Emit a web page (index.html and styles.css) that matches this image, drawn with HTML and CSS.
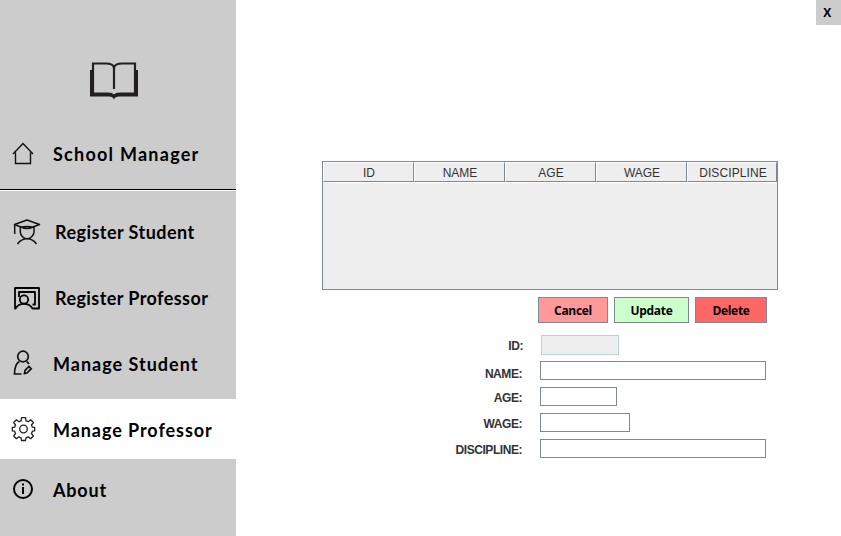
FILE: index.html
```html
<!DOCTYPE html>
<html lang="en">
<head>
<meta charset="utf-8">
<title>School Manager</title>
<link rel="stylesheet" href="styles.css">
</head>
<body>
<div class="app">
  <nav class="sidebar">
    <div class="logo">
      <svg width="50" height="40" viewBox="0 0 50 40" fill="none" stroke="#231f20">
        <path d="M4 33V3.500H17Q24 3.500 25 7.500Q26 3.500 33 3.500H46V33" stroke-width="2.200"/>
        <path d="M25 6V29" stroke-width="2.200"/>
        <path d="M1 10H4V32.500H19Q23.500 32.500 25 34.500Q26.500 32.500 31 32.500H46V10H49V36.500H30Q26 36.500 25 39.500Q24 36.500 20 36.500H1Z" fill="#231f20" stroke="none"/>
      </svg>
    </div>
    <div class="item home">
      <svg class="icon" width="30" height="30" viewBox="0 0 30 30" fill="none" stroke="#111" stroke-width="1.400"><path d="M5 15L15 4.500L25 15M7.500 13.500V24.500H22.500V13.500"/></svg>
      <span class="label t-school">School Manager</span>
    </div>
    <div class="divider"></div>
    <div class="item wide">
      <svg class="icon" width="30" height="30" viewBox="0 -1 30 30" fill="none" stroke="#111" stroke-width="1.500" stroke-linejoin="round"><path d="M2.500 7.500L15 3L27.500 7.500L21 10Q15 8.800 9 10Z M2.700 8V17M9 10Q15 13 21 10M8.300 10V15C8.300 18.500 12 21.800 15 21.800S22 18.500 22 15V10M5.500 27C8 23.500 11 21.800 15 21.800S22 23.500 24.500 27"/></svg>
      <span class="label t-rs">Register Student</span>
    </div>
    <div class="item wide">
      <svg class="icon" width="30" height="30" viewBox="0 -1 30 30" fill="none" stroke="#000" stroke-width="1.800" stroke-linejoin="round"><path d="M3 25.500V5H27V25.500H20.500Q18 20.800 12 20.800T3.500 25.500ZM7 14V9H23V21.500H20.500"/><circle cx="12" cy="16.500" r="4.200"/></svg>
      <span class="label t-rp">Register Professor</span>
    </div>
    <div class="item">
      <svg class="icon" width="30" height="30" viewBox="0 0 30 30" fill="none" stroke="#111" stroke-width="1.700"><circle cx="15" cy="8.500" r="5.300"/><path d="M11.500 13.500Q6.500 16 6.500 26H13.500M18.500 13.500Q20 14.500 21 16"/><path d="M16.500 25.500L17 22.500L21 18.500L23.200 20.700L19.300 24.800Z"/></svg>
      <span class="label t-ms">Manage Student</span>
    </div>
    <div class="item active">
      <svg class="icon" width="30" height="30" viewBox="0 0 30 30" fill="none" stroke="#222" stroke-width="1.300" stroke-linejoin="round"><circle cx="15.500" cy="15" r="3.800"/><path transform="translate(.5)" d="M13 3.700H17L17.500 6.800L19.700 7.700L22.200 5.800L24.900 8.500L23 11L23.900 13.200L26.200 13.500V16.800L23.900 17.200L23 19.500L24.900 22L22.200 24.700L19.700 22.900L17.500 23.800L17 26.500H13L12.600 23.800L10.400 22.900L7.900 24.700L5.200 22L7 19.500L6.100 17.200L3.800 16.800V13.500L6.100 13.200L7 11L5.200 8.500L7.900 5.800L10.400 7.700L12.600 6.800Z"/></svg>
      <span class="label t-mp">Manage Professor</span>
    </div>
    <div class="item about">
      <svg class="icon" width="30" height="30" viewBox="0 0 30 30" fill="none" stroke="#000" stroke-width="2"><circle cx="15" cy="15" r="9"/><path d="M15 13V20M15 9.500V11.500"/></svg>
      <span class="label t-ab">About</span>
    </div>
  </nav>
  <main class="main">
    <div class="titlebar"><button class="close">X</button></div>
    <div class="table">
      <div class="thead"><span>ID</span><span>NAME</span><span>AGE</span><span>WAGE</span><span>DISCIPLINE</span></div>
    </div>
    <div class="actions">
      <button class="cancel">Cancel</button>
      <button class="update">Update</button>
      <button class="delete">Delete</button>
    </div>
    <form class="form">
      <div class="row id-row"><label>ID:</label><i class="field disabled"></i></div>
      <div class="row name-row"><label>NAME:</label><i class="field long"></i></div>
      <div class="row"><label>AGE:</label><i class="field age"></i></div>
      <div class="row"><label>WAGE:</label><i class="field wage"></i></div>
      <div class="row"><label>DISCIPLINE:</label><i class="field long"></i></div>
    </form>
  </main>
</div>
</body>
</html>
```
FILE: styles.css
```css
* { box-sizing: border-box; }
body { margin: 0; background: #fff; }
.app { display: flex; width: 841px; height: 536px; overflow: hidden; }
.sidebar { width: 236px; height: 536px; background: #ccc; display: flex; flex-direction: column; }
.logo { height: 119px; padding: 60px 0 0 89px; }
.logo svg, .icon { display: block; flex: none; }
.item { height: 60px; margin-bottom: 6px; padding-left: 8px; display: flex; align-items: center; }
.item.home { height: 70px; margin: 0; }
.item.wide { padding-left: 12px; }
.item.active { background: #fff; margin-bottom: 0; }
.divider { height: 2px; background: #000; border-bottom: 1px solid #fff; margin-bottom: 10px; flex: none; }
.label { font: bold 18px/24px Lato, "Liberation Sans", sans-serif; color: #000; margin: 1px 0 0 15px; white-space: nowrap; }
.home .label { margin-top: 0; }
.wide .label { margin-left: 13px; }
.t-school { letter-spacing: 1.25px; }
.t-rs { letter-spacing: .45px; }
.t-rp { letter-spacing: .42px; }
.t-ms { letter-spacing: 1px; }
.t-mp { letter-spacing: .93px; }
.t-ab { letter-spacing: .8px; }
.main { width: 605px; }
.titlebar { height: 161px; display: flex; justify-content: flex-end; }
button { border: 1px solid #7a8a99; padding: 2px 0 0; color: #000; font: bold 12px/16px "Open Sans", sans-serif; letter-spacing: -.3px; }
.close { width: 25px; height: 25px; border: 0; background: #ccc; padding: 0 3px 0 0; font-size: 12px; }
.table { width: 456px; height: 129px; margin-left: 86px; background: #eee; border: 1px solid #7a8a99; }
.thead { display: grid; grid-template-columns: repeat(5, 91px); grid-template-rows: 20px; height: 21px; width: 454px; border-bottom: 1px solid #fff; }
.thead span { height: 20px; border: 1px solid #7a8a99; border-top-color: #fff; border-left-color: #fff; font: 12px/21px "Liberation Sans", sans-serif; color: #333; text-align: center; padding-left: 1px; }
.thead span:last-child { width: 90px; letter-spacing: .1px; padding-left: 2px; }
.actions { display: flex; gap: 6px; margin: 7px 0 0 302px; height: 26px; }
.cancel { width: 70px; background: #f99; }
.update { width: 75px; background: #cfc; }
.delete { width: 72px; background: #f66; }
.form { margin-top: 12px; }
.row { display: flex; height: 26px; }
.row label { width: 286px; margin-right: 18px; text-align: right; font: bold 12px/22px "Liberation Sans", sans-serif; color: #333; letter-spacing: -.45px; }
.name-row label { line-height: 26px; }
.id-row label { width: 287px; line-height: 23px; }
.field { height: 19px; border: 1px solid #7a8a99; background: #fff; }
.field.disabled { height: 20px; width: 78px; background: #eee; border-color: #b8cfe5; }
.long { width: 226px; }
.age { width: 77px; }
.wage { width: 90px; }
```
